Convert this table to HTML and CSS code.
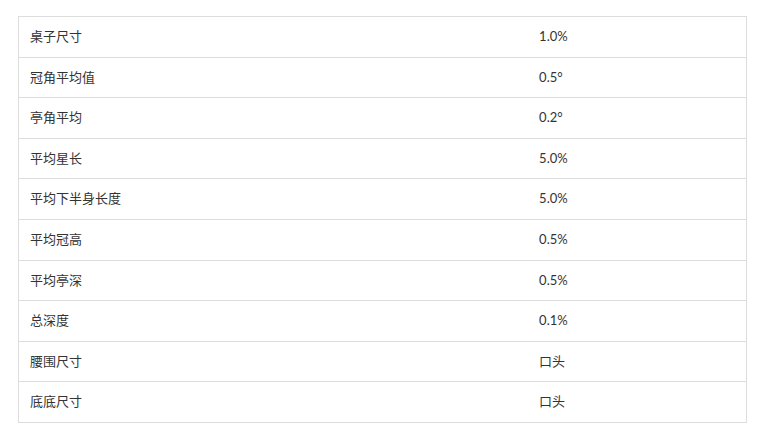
FILE: index.html
```html
<!DOCTYPE html>
<html lang="zh">
<head>
<meta charset="utf-8">
<link rel="stylesheet" href="styles.css">
</head>
<body>
<div class="wrap">
<table class="spec">
<tbody>
<tr><td class="name">桌子尺寸</td><td class="val">1.0%</td></tr>
<tr><td class="name">冠角平均值</td><td class="val">0.5°</td></tr>
<tr><td class="name">亭角平均</td><td class="val">0.2°</td></tr>
<tr><td class="name">平均星长</td><td class="val">5.0%</td></tr>
<tr><td class="name">平均下半身长度</td><td class="val">5.0%</td></tr>
<tr><td class="name">平均冠高</td><td class="val">0.5%</td></tr>
<tr><td class="name">平均亭深</td><td class="val">0.5%</td></tr>
<tr><td class="name">总深度</td><td class="val">0.1%</td></tr>
<tr><td class="name">腰围尺寸</td><td class="val">口头</td></tr>
<tr><td class="name">底底尺寸</td><td class="val">口头</td></tr>
</tbody>
</table>
</div>
</body>
</html>
```
FILE: styles.css
```css
html, body {
  margin: 0;
  padding: 0;
  background: #fff;
}
body {
  font-family: Lato, "Noto Sans CJK SC", sans-serif;
  font-size: 13px;
  color: #333;
}
.wrap {
  padding: 16px 21px 0 18px;
}
.spec {
  width: 729px;
  border-collapse: collapse;
  border: 1px solid #ddd;
}
.spec td {
  border-top: 1px solid #ddd;
  padding: 10px 12px 10px 11px;
  line-height: 19.6px;
  vertical-align: middle;
}
.spec .name {
  width: 70%;
}
```
